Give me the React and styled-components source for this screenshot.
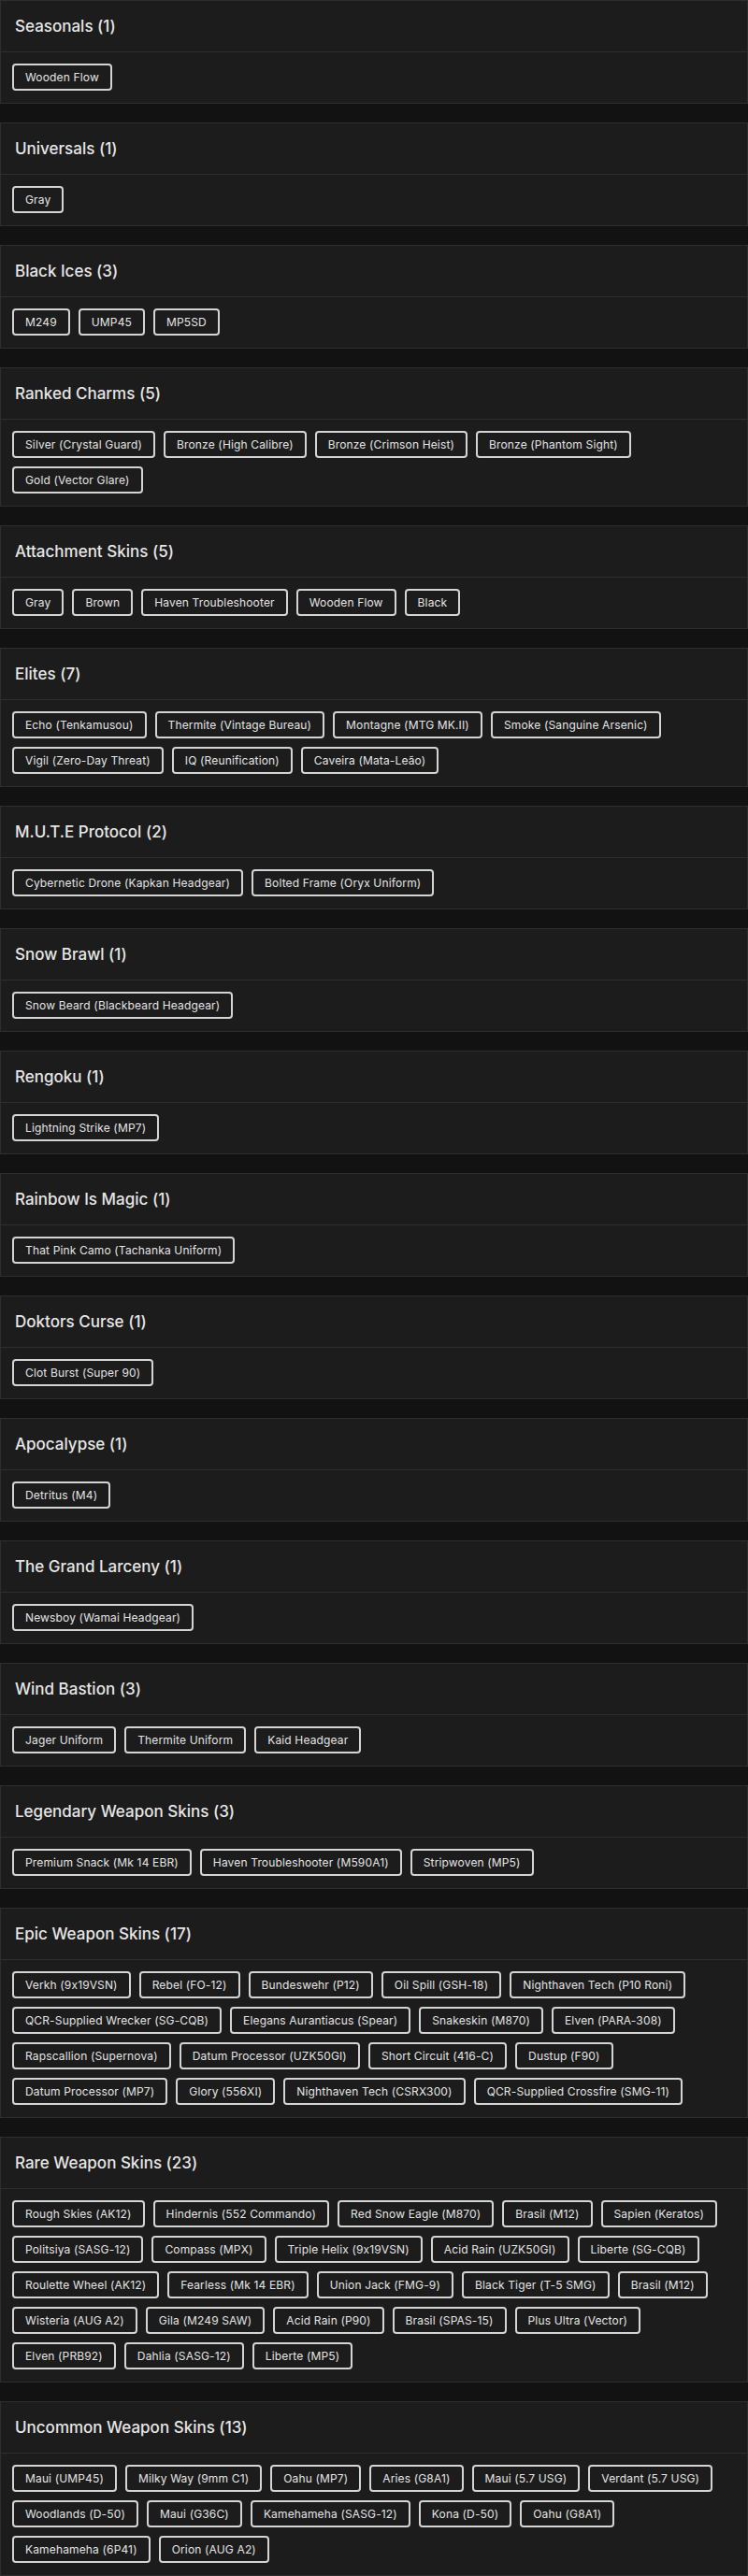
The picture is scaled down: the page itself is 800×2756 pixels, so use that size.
import React from 'react'
import styled, { createGlobalStyle } from 'styled-components'

const GlobalStyle = createGlobalStyle`
    * {
        box-sizing: border-box;
    }

    body {
        margin: 0;
        background: #121212;
        font-family: "Inter", "Noto Sans", sans-serif;
        font-feature-settings: "calt" 0;
        color: #e4e4e4;
    }
`

const categories = [
    { title: "Seasonals", items: ["Wooden Flow"] },
    { title: "Universals", items: ["Gray"] },
    { title: "Black Ices", items: ["M249", "UMP45", "MP5SD"] },
    {
        title: "Ranked Charms",
        items: ["Silver (Crystal Guard)", "Bronze (High Calibre)", "Bronze (Crimson Heist)", "Bronze (Phantom Sight)", "Gold (Vector Glare)"]
    },
    { title: "Attachment Skins", items: ["Gray", "Brown", "Haven Troubleshooter", "Wooden Flow", "Black"] },
    {
        title: "Elites",
        items: ["Echo (Tenkamusou)", "Thermite (Vintage Bureau)", "Montagne (MTG MK.II)", "Smoke (Sanguine Arsenic)", "Vigil (Zero-Day Threat)", "IQ (Reunification)", "Caveira (Mata-Leão)"]
    },
    { title: "M.U.T.E Protocol", items: ["Cybernetic Drone (Kapkan Headgear)", "Bolted Frame (Oryx Uniform)"] },
    { title: "Snow Brawl", items: ["Snow Beard (Blackbeard Headgear)"] },
    { title: "Rengoku", items: ["Lightning Strike (MP7)"] },
    { title: "Rainbow Is Magic", items: ["That Pink Camo (Tachanka Uniform)"] },
    { title: "Doktors Curse", items: ["Clot Burst (Super 90)"] },
    { title: "Apocalypse", items: ["Detritus (M4)"] },
    { title: "The Grand Larceny", items: ["Newsboy (Wamai Headgear)"] },
    { title: "Wind Bastion", items: ["Jager Uniform", "Thermite Uniform", "Kaid Headgear"] },
    { title: "Legendary Weapon Skins", items: ["Premium Snack (Mk 14 EBR)", "Haven Troubleshooter (M590A1)", "Stripwoven (MP5)"] },
    {
        title: "Epic Weapon Skins",
        items: [
            "Verkh (9x19VSN)", "Rebel (FO-12)", "Bundeswehr (P12)", "Oil Spill (GSH-18)", "Nighthaven Tech (P10 Roni)",
            "QCR-Supplied Wrecker (SG-CQB)", "Elegans Aurantiacus (Spear)", "Snakeskin (M870)", "Elven (PARA-308)",
            "Rapscallion (Supernova)", "Datum Processor (UZK50GI)", "Short Circuit (416-C)", "Dustup (F90)",
            "Datum Processor (MP7)", "Glory (556XI)", "Nighthaven Tech (CSRX300)", "QCR-Supplied Crossfire (SMG-11)"
        ]
    },
    {
        title: "Rare Weapon Skins",
        items: [
            "Rough Skies (AK12)", "Hindernis (552 Commando)", "Red Snow Eagle (M870)", "Brasil (M12)", "Sapien (Keratos)",
            "Politsiya (SASG-12)", "Compass (MPX)", "Triple Helix (9x19VSN)", "Acid Rain (UZK50GI)", "Liberte (SG-CQB)",
            "Roulette Wheel (AK12)", "Fearless (Mk 14 EBR)", "Union Jack (FMG-9)", "Black Tiger (T-5 SMG)", "Brasil (M12)",
            "Wisteria (AUG A2)", "Gila (M249 SAW)", "Acid Rain (P90)", "Brasil (SPAS-15)", "Plus Ultra (Vector)",
            "Elven (PRB92)", "Dahlia (SASG-12)", "Liberte (MP5)"
        ]
    },
    {
        title: "Uncommon Weapon Skins",
        items: [
            "Maui (UMP45)", "Milky Way (9mm C1)", "Oahu (MP7)", "Aries (G8A1)", "Maui (5.7 USG)", "Verdant (5.7 USG)",
            "Woodlands (D-50)", "Maui (G36C)", "Kamehameha (SASG-12)", "Kona (D-50)", "Oahu (G8A1)",
            "Kamehameha (6P41)", "Orion (AUG A2)"
        ]
    }
]

function App() {
    return (
        <Wrapper>
            <GlobalStyle />
            {categories.map((cat) => (
                <Card key={cat.title}>
                    <CardHeader>
                        <Title>{cat.title} ({cat.items.length})</Title>
                    </CardHeader>
                    <CardBody>
                        {cat.items.map((item, i) => (
                            <Tag key={i}>{item}</Tag>
                        ))}
                    </CardBody>
                </Card>
            ))}
        </Wrapper>
    )
}

export default App

const Wrapper = styled.div`
    width: 800px;
    display: flex;
    flex-direction: column;
    gap: 20px;
`

const Card = styled.section`
    background: #1c1c1c;
    border: 1px solid #2e2e2e;
`

const CardHeader = styled.div`
    height: 55px;
    display: flex;
    align-items: center;
    padding: 0 15px;
    border-bottom: 1px solid #2e2e2e;
`

const Title = styled.h3`
    margin: 0;
    font-size: 17px;
    font-weight: 500;
    color: #e6e6e6;
`

const CardBody = styled.div`
    display: flex;
    flex-wrap: wrap;
    gap: 9px;
    padding: 12px 12px 13px;
`

const Tag = styled.div`
    height: 29px;
    display: flex;
    align-items: center;
    padding: 0 12px;
    border: 2px solid #d4d4d4;
    border-radius: 4px;
    font-size: 12px;
    letter-spacing: 0.15px;
    color: #e4e4e4;
    white-space: nowrap;
`
